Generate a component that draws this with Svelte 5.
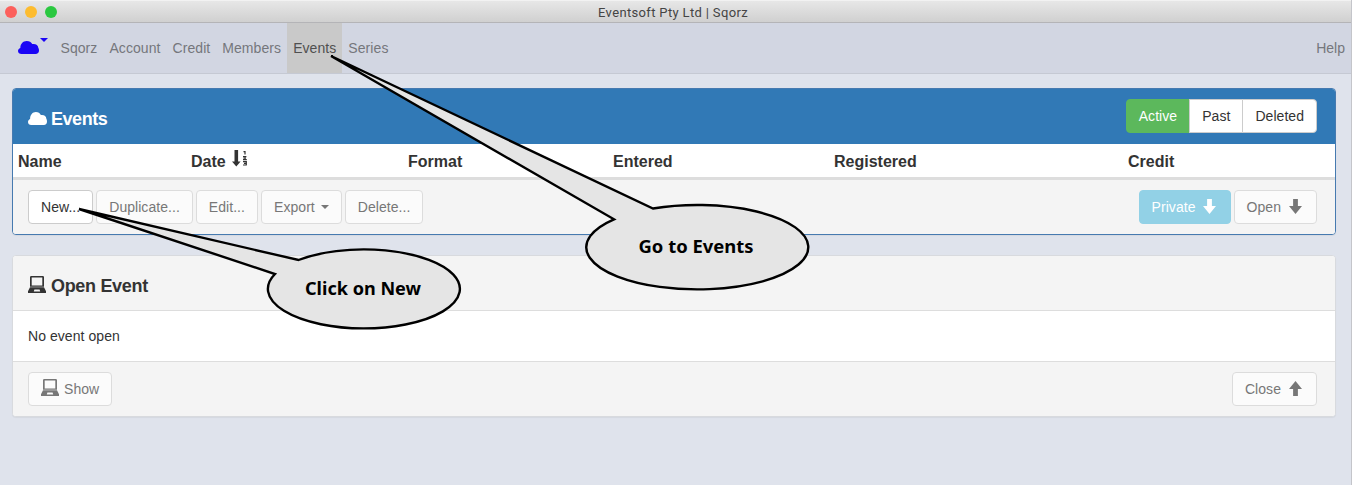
<script>
  const links = ['Sqorz', 'Account', 'Credit', 'Members', 'Events', 'Series'];
  const filters = ['Active', 'Past', 'Deleted'];
  const columns = ['Name', 'Date', 'Format', 'Entered', 'Registered', 'Credit'];
</script>

{#snippet cloud(w, h)}
  <svg class="cloud" width={w} height={h} viewBox="0 0 21 14" preserveAspectRatio="none">
    <path fill="currentColor" d="M3.500 14C1.500 14 0 12.600 0 10.700C0 9.200 .9 8 2.300 7.500C2.400 3 5 0 8.700 0C11.300 0 13.200 1.300 14.200 3.300C17.700 2.700 20.200 4.600 20.300 7.300C20.800 8 21 9 21 10.300C21 12.500 19.700 14 17.500 14Z" />
  </svg>
{/snippet}

{#snippet laptop()}
  <svg class="laptop" width="18" height="17" viewBox="0 0 18 17">
    <path fill="currentColor" fill-rule="evenodd" d="M2 1.200Q2 0 3.200 0H14.800Q16 0 16 1.200V10.700H2ZM3.700 1.600V9.500H14.300V1.600ZM2 11.200H16L18 15.200V17H0V15.200ZM6.400 13.500L5.800 15.500H12.200L11.600 13.500Z" />
  </svg>
{/snippet}

{#snippet arrow(up)}
  <svg class="arrow" class:up width="13" height="15" viewBox="0 0 13 15">
    <path fill="currentColor" d="M4.100 0H8.900V7H13L6.500 15L0 7H4.100Z" />
  </svg>
{/snippet}

<div class="window">
  <header class="titlebar">
    <div class="lights"><i class="red"></i><i class="amber"></i><i class="green"></i></div>
    <span>Eventsoft Pty Ltd | Sqorz</span>
  </header>

  <nav>
    <div class="brand">
      {@render cloud(21, 13)}
      <svg class="tri" width="8" height="4" viewBox="0 0 8 4"><path fill="currentColor" d="M0 0H8L4 4Z" /></svg>
    </div>
    {#each links as link}
      <a class:current={link === 'Events'}>{link}</a>
    {/each}
    <a class="help">Help</a>
  </nav>

  <main>
    <section class="panel primary">
      <div class="heading">
        <h2>{@render cloud(19, 13)}<span>Events</span></h2>
        <div class="group">
          {#each filters as f, i}
            <button class:on={i === 0}>{f}</button>
          {/each}
        </div>
      </div>
      <div class="columns">
        {#each columns as c}
          <div>
            {c}
            {#if c === 'Date'}
              <svg class="sort" width="17" height="17" viewBox="0 0 17 17">
                <path fill="currentColor" d="M3.500 0H7.100V11.500H9.600L5.300 16.500L1 11.500H3.500Z" />
                <path fill="none" stroke="currentColor" stroke-width="1.200" d="M12.500 1.600H14V4.500M12 6.600H15.400M15 8.100H12.500M12 9.600H15.800M12 11.600H15.800M13 13.300H15.500M12 15H15.800M15.300 11V15" />
              </svg>
            {/if}
          </div>
        {/each}
      </div>
      <div class="footer">
        <button>New...</button>
        <button class="off">Duplicate...</button>
        <button class="off">Edit...</button>
        <button class="off">Export<i class="caret"></i></button>
        <button class="off">Delete...</button>
        <span class="fill"></span>
        <button class="off info">Private{@render arrow(false)}</button>
        <button class="off">Open{@render arrow(false)}</button>
      </div>
    </section>

    <section class="panel">
      <div class="heading"><h2>{@render laptop()}<span>Open Event</span></h2></div>
      <div class="body">No event open</div>
      <div class="footer last">
        <button class="off show">{@render laptop()}Show</button>
        <span class="fill"></span>
        <button class="off">Close{@render arrow(true)}</button>
      </div>
    </section>
  </main>

  <svg class="callouts" width="1352" height="485" viewBox="0 0 1352 485">
    <g fill="#e5e5e5" stroke="#000" stroke-width="2.400">
      <path d="M331 56L653 208.500A111 42.200 0 1 1 614 219.300Z" />
      <path d="M79 209L298.500 260A96 39.500 0 1 1 275 274Z" />
    </g>
    <text x="638.500" y="253" textLength="115" lengthAdjust="spacingAndGlyphs">Go to Events</text>
    <text x="305" y="295" textLength="116" lengthAdjust="spacingAndGlyphs">Click on New</text>
  </svg>
</div>

<style>
  :global(body) { margin: 0; background: #dfe3ec; }
  * { box-sizing: border-box; }
  .window {
    position: relative;
    height: 485px;
    overflow: hidden;
    background: #dfe3ec;
    border-right: 1px solid #c4c5ca;
    font: 14px/20px "Liberation Sans", Arial, sans-serif;
    color: #333;
  }
  svg { display: block; flex: none; }
  .titlebar {
    display: flex;
    align-items: center;
    justify-content: center;
    height: 23px;
    padding-top: 2px;
    border-top: 1px solid #f2f2f2;
    border-bottom: 1px solid #b4b4b7;
    background: linear-gradient(#e7e7e7, #d0d0d0);
    font: 13px/20px Roboto, sans-serif;
    letter-spacing: 0.340px;
    color: #444;
    position: relative;
  }
  .titlebar span { padding-right: 5px; }
  .lights { position: absolute; left: 5px; top: 5px; display: flex; gap: 8px; }
  .lights i { width: 12px; height: 12px; border-radius: 50%; }
  .red { background: #fc605b; }
  .amber { background: #fdbc2e; }
  .green { background: #2bc840; }

  nav {
    display: flex;
    height: 51px;
    background: #d2d6e2;
    border-bottom: 1px solid #c5c9d3;
  }
  .brand { display: flex; width: 54.500px; padding: 18px 0 0 18px; color: #1b05f5; }
  .brand .tri { margin: -3px 0 0 1px; }
  a { padding: 15px 6px; color: #75777c; white-space: nowrap; letter-spacing: 0.070px; }
  a.current { background: #c9c9c9; color: #505050; }
  .help { margin-left: auto; letter-spacing: 0; }

  main { display: flex; flex-direction: column; gap: 20px; padding: 14px 15px 0 12px; }
  .panel {
    background: #fff;
    border: 1px solid #d8dade;
    border-radius: 4px;
    box-shadow: 0 1px 1px rgba(0, 0, 0, 0.05);
    overflow: hidden;
  }
  .primary { border-color: #467ab0; height: 147px; }
  .heading {
    display: flex;
    justify-content: space-between;
    height: 55px;
    padding: 10px 18px 0 15px;
    background: #f4f4f4;
    border-bottom: 1px solid #ddd;
  }
  .primary .heading { background: #3179b6; border-color: #3179b6; color: #fff; }
  h2 {
    display: flex;
    align-items: center;
    gap: 4px;
    height: 39px;
    margin: 0;
    font-size: 18px;
    font-weight: 700;
    letter-spacing: -0.320px;
  }
  h2 .laptop { margin-top: -3px; }
  h2 .laptop + span { margin-left: 1px; }
  .primary h2 span { letter-spacing: -0.450px; }

  button {
    display: flex;
    align-items: center;
    height: 34px;
    padding: 0 12px;
    border: 1px solid #ccc;
    border-radius: 4px;
    background: #fff;
    color: #333;
    font: 14px/20px "Liberation Sans", Arial, sans-serif;
    letter-spacing: 0.050px;
    white-space: nowrap;
  }
  .group { display: flex; }
  .group button { border-radius: 0; margin-left: -1px; }
  .group button:first-child { border-radius: 4px 0 0 4px; }
  .group button:last-child { border-radius: 0 4px 4px 0; }
  .group .on { background: #5cb85c; border-color: #5cb85c; color: #fff; }

  .columns {
    display: grid;
    grid-template-columns: 173px 217px 205px 221px 294px 1fr;
    height: 36px;
    padding: 8px 5px 0;
    border-bottom: 3px solid #ddd;
    font-size: 16px;
    font-weight: 700;
  }
  .columns div { display: flex; gap: 5px; }
  .sort { margin-top: -2px; }

  .footer { display: flex; gap: 3px; height: 55px; padding: 10px 18px 0 15px; background: #f4f4f4; }
  .last { height: 54px; }
  .fill { flex: 1; }
  .off { background: #fbfbfb; border-color: #dcdcdc; color: #777; }
  .info { background: #92d1e6; border-color: #92d1e6; color: #fff; }
  .caret {
    margin-left: 6px;
    border: 4px solid transparent;
    border-top-color: currentColor;
    border-bottom: 0;
  }
  .arrow { margin: -2px 2px 0 8px; }
  .info .arrow { margin-left: 7px; }
  .up { transform: rotate(180deg); }
  .show .laptop { margin: -3px 5px 0 0; }
  .body { height: 51px; padding: 15px; border-bottom: 1px solid #ddd; letter-spacing: 0.060px; }

  .callouts { position: absolute; left: 0; top: 0; }
  .callouts text { font: 700 18px "Noto Sans", "Open Sans", sans-serif; fill: #000; }
</style>
